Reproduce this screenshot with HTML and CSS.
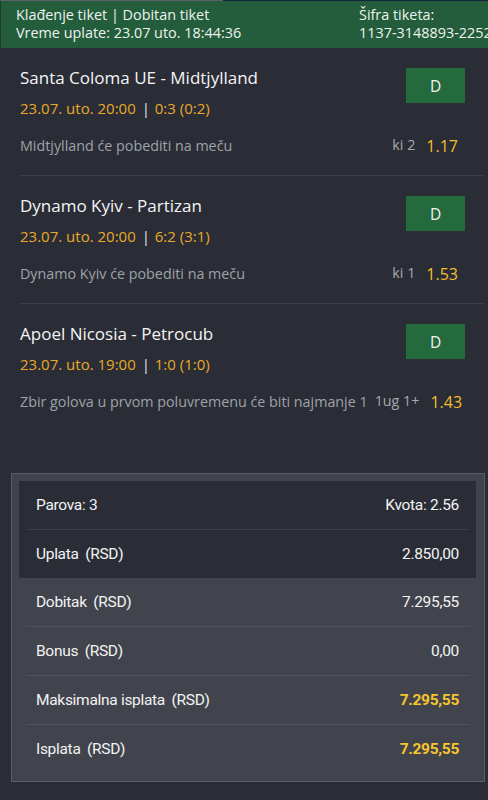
FILE: index.html
```html
<!DOCTYPE html>
<html lang="sr">
<head>
<meta charset="utf-8">
<title>Klađenje tiket</title>
<link rel="stylesheet" href="styles.css">
</head>
<body>
<div class="topline"><div class="topline-left"></div><div class="topline-right"></div></div>
<header class="header">
  <div class="header-left">
    <div>Klađenje tiket | Dobitan tiket</div>
    <div>Vreme uplate: 23.07 uto. 18:44:36</div>
  </div>
  <div class="header-right">
    <div>Šifra tiketa:</div>
    <div>1137-3148893-2252</div>
  </div>
</header>

<main class="matches">
  <section class="match">
    <div class="match-top">
      <div class="match-info">
        <div class="match-title">Santa Coloma UE - Midtjylland</div>
        <div class="match-date">23.07. uto. 20:00 <span class="bar">|</span> 0:3 (0:2)</div>
      </div>
      <div class="btn-d">D</div>
    </div>
    <div class="pick">
      <span class="pick-text">Midtjylland će pobediti na meču</span>
      <span class="pick-code">ki 2</span>
      <span class="pick-odd">1.17</span>
    </div>
  </section>

  <section class="match">
    <div class="match-top">
      <div class="match-info">
        <div class="match-title">Dynamo Kyiv - Partizan</div>
        <div class="match-date">23.07. uto. 20:00 <span class="bar">|</span> 6:2 (3:1)</div>
      </div>
      <div class="btn-d">D</div>
    </div>
    <div class="pick">
      <span class="pick-text">Dynamo Kyiv će pobediti na meču</span>
      <span class="pick-code">ki 1</span>
      <span class="pick-odd">1.53</span>
    </div>
  </section>

  <section class="match match-last">
    <div class="match-top">
      <div class="match-info">
        <div class="match-title">Apoel Nicosia - Petrocub</div>
        <div class="match-date">23.07. uto. 19:00 <span class="bar">|</span> 1:0 (1:0)</div>
      </div>
      <div class="btn-d">D</div>
    </div>
    <div class="pick">
      <span class="pick-text">Zbir golova u prvom poluvremenu će biti najmanje 1</span>
      <span class="pick-code">1ug 1+</span>
      <span class="pick-odd">1.43</span>
    </div>
  </section>
</main>

<section class="summary">
  <div class="summary-dark">
    <div class="row"><span>Parova: 3</span><span>Kvota: 2.56</span></div>
    <div class="sep sep-dark"></div>
    <div class="row"><span>Uplata <span class="unit">(RSD)</span></span><span>2.850,00</span></div>
  </div>
  <div class="row"><span>Dobitak <span class="unit">(RSD)</span></span><span>7.295,55</span></div>
  <div class="sep"></div>
  <div class="row"><span>Bonus <span class="unit">(RSD)</span></span><span>0,00</span></div>
  <div class="sep"></div>
  <div class="row"><span>Maksimalna isplata <span class="unit">(RSD)</span></span><span class="gold">7.295,55</span></div>
  <div class="sep"></div>
  <div class="row"><span>Isplata <span class="unit">(RSD)</span></span><span class="gold">7.295,55</span></div>
</section>
</body>
</html>
```

FILE: styles.css
```css
* { box-sizing: border-box; }

html, body {
  margin: 0;
  padding: 0;
}

body {
  width: 488px;
  height: 800px;
  overflow: hidden;
  background: #2a2d36;
  font-family: "Open Sans", "Lato", sans-serif;
  color: #f2f2f2;
}

.topline {
  display: flex;
  height: 1px;
}
.topline-left { width: 223px; background: #5b5f66; }
.topline-right { flex: 1; background: #15233a; }

.header {
  display: grid;
  grid-template-columns: 343px 1fr;
  height: 47px;
  padding: 5px 0 0 15px;
  background: #245d3c;
  border-left: 1px solid #1f3b2c;
  font-size: 14.4px;
  line-height: 18px;
  color: #eef2ee;
  white-space: nowrap;
  overflow: hidden;
}

.matches {
  display: flex;
  flex-direction: column;
}

.match {
  margin: 0 4px 0 20px;
  padding: 20px 0 19px;
  border-bottom: 1px solid #3a3e47;
}
.match-last { border-bottom: 1px solid transparent; }

.match-top {
  display: flex;
  justify-content: space-between;
  align-items: flex-start;
}

.match-title {
  font-size: 17px;
  line-height: 20px;
  color: #f4f4f4;
}

.match-date {
  margin-top: 10px;
  font-size: 15px;
  line-height: 20px;
  color: #e8a92a;
}
.match-date .bar { color: #e6e6e6; padding: 0 1px 0 2px; }

.btn-d {
  width: 59px;
  height: 35px;
  margin-right: 19px;
  background: #256a3c;
  color: #f2f2f2;
  font-size: 15.5px;
  display: flex;
  align-items: center;
  justify-content: center;
}

.pick {
  display: flex;
  align-items: center;
  margin-top: 18px;
  padding-right: 26px;
  line-height: 20px;
  white-space: nowrap;
}
.pick-text {
  flex: 1;
  font-size: 14.3px;
  color: #9fa2a8;
}
.pick-code {
  font-size: 14.3px;
  color: #a6a9ae;
  margin: 0 11px 0 7px;
  position: relative;
  top: -1px;
}
.pick-odd {
  font-size: 16px;
  color: #f2be2e;
}

.summary {
  margin: 41px 3px 0 11px;
  padding: 7px 8px 8px 7px;
  background: #41444d;
  border: 1px solid #585c64;
  font-family: "Roboto", "Liberation Sans", sans-serif;
  font-size: 15.5px;
  letter-spacing: -0.3px;
  color: #f3f3f3;
}

.summary-dark {
  background: #2a2d36;
}

.row {
  display: flex;
  justify-content: space-between;
  align-items: center;
  height: 48px;
  padding: 0 17px;
}
.unit { margin-left: 3px; }

.sep {
  height: 1px;
  margin: 0 6px 0 7px;
  background: #4f525b;
}
.sep-dark { background: #3b3e47; }

.gold {
  color: #f7c52c;
  font-weight: 700;
}
```
